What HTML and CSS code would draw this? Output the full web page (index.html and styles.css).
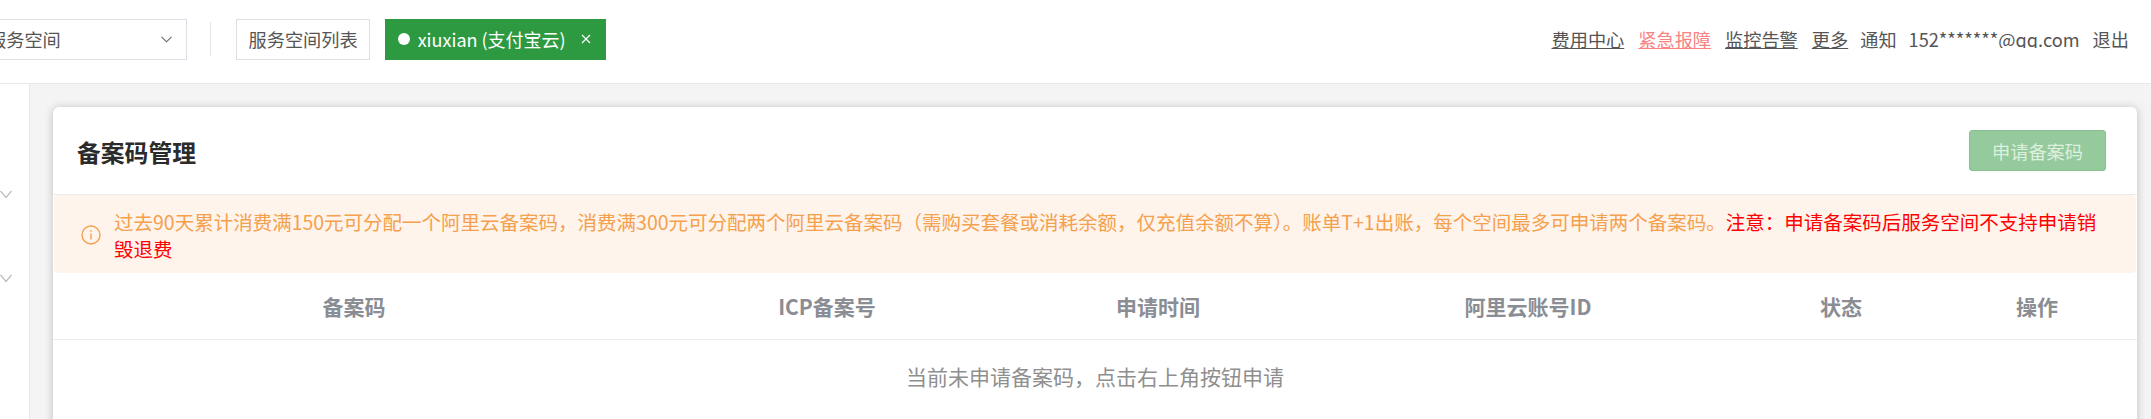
FILE: index.html
```html
<!DOCTYPE html>
<html lang="zh-CN">
<head>
    <meta charset="UTF-8">
    <title>备案码管理</title>
    <link rel="stylesheet" href="styles.css">
</head>
<body>
    <header class="topbar">
        <div class="space-select">
            <span>服务空间</span>
            <svg class="chevron" width="11" height="7" viewBox="0 0 11 7"><path d="M.5 .8l5 5 5-5" fill="none" stroke="#666" stroke-width="1.1"/></svg>
        </div>
        <div class="divider"></div>
        <div class="tab">服务空间列表</div>
        <div class="tab tab-active">
            <span class="dot"></span>
            <span>xiuxian (支付宝云)</span>
            <svg class="tab-close" width="10" height="10" viewBox="0 0 10 10"><path d="M1 1l8 8M9 1l-8 8" stroke="#fff" stroke-width="1.2"/></svg>
        </div>
        <nav class="top-links">
            <a href="#">费用中心</a>
            <a href="#" class="urgent">紧急报障</a>
            <a href="#">监控告警</a>
            <a href="#">更多</a>
            <span class="notice">通知</span>
            <span class="email">152*******@qq.com</span>
            <span class="logout">退出</span>
        </nav>
    </header>

    <div class="main">
        <aside class="sidebar">
            <svg class="side-arrow" width="12" height="9" viewBox="0 0 12 9"><path d="M.5 1l5.500 6.500L11.500 1" fill="none" stroke="#bbb" stroke-width="1.2"/></svg>
            <svg class="side-arrow" width="12" height="9" viewBox="0 0 12 9"><path d="M.5 1l5.500 6.500L11.500 1" fill="none" stroke="#bbb" stroke-width="1.2"/></svg>
        </aside>
        <section class="content">
            <div class="card">
                <div class="card-head">
                    <h2>备案码管理</h2>
                    <button type="button" class="apply-button">申请备案码</button>
                </div>
                <div class="alert">
                    <svg class="alert-icon" width="20" height="20" viewBox="0 0 20 20"><circle cx="10" cy="10" r="9" fill="none" stroke="#f5a04c" stroke-width="1.4"/><path d="M10 8.600v6M10 5.200v1.600" stroke="#f5a04c" stroke-width="1.4"/></svg>
                    <p>过去90天累计消费满150元可分配一个阿里云备案码，消费满300元可分配两个阿里云备案码（需购买套餐或消耗余额，仅充值余额不算）。账单T+1出账，每个空间最多可申请两个备案码。<span class="warn">注意：申请备案码后服务空间不支持申请销毁退费</span></p>
                </div>
                <div class="table-head">
                    <div>备案码</div>
                    <div>ICP备案号</div>
                    <div>申请时间</div>
                    <div>阿里云账号ID</div>
                    <div>状态</div>
                    <div>操作</div>
                </div>
                <div class="empty">当前未申请备案码，点击右上角按钮申请</div>
            </div>
        </section>
    </div>
</body>
</html>
```

FILE: styles.css
```css
* {
    margin: 0;
    padding: 0;
    box-sizing: border-box;
}

html, body {
    height: 419px;
    overflow: hidden;
}

body {
    background: #fff;
    color: #555;
    font-family: "Noto Sans CJK SC", "Noto Sans", sans-serif;
    font-size: 18.2px;
}

.topbar {
    display: flex;
    align-items: center;
    height: 84px;
    padding-bottom: 5px;
    background: #fff;
    border-bottom: 1px solid #e8e8e8;
}

.space-select {
    display: flex;
    align-items: center;
    justify-content: space-between;
    width: 200px;
    height: 41px;
    margin-left: -13px;
    padding-right: 14px;
    border: 1px solid #dcdfe6;
    color: #555;
    flex-shrink: 0;
}

.divider {
    width: 1px;
    height: 34px;
    margin: 0 25px 0 23px;
    background: #e6e6e6;
}

.tab {
    display: flex;
    align-items: center;
    height: 41px;
    padding: 0 11.5px;
    border: 1px solid #dcdfe6;
    color: #555;
    white-space: nowrap;
}

.tab-active {
    width: 221px;
    gap: 8px;
    margin-left: 15px;
    background: #2d9a41;
    border-color: #2d9a41;
    color: #fff;
    font-size: 18px;
}

.dot {
    width: 12px;
    height: 12px;
    border-radius: 50%;
    background: #fff;
}

.tab-close {
    margin-left: 7px;
}

.top-links {
    display: flex;
    align-items: center;
    gap: 14px;
    height: 26px;
    margin-left: auto;
    margin-right: 22px;
    line-height: 26px;
}

.top-links a {
    color: #555;
}

.top-links .urgent {
    color: #f98383;
}

.notice {
    margin-left: -2px;
}

.email {
    align-self: flex-start;
    height: 22px;
    margin-left: -2px;
    overflow: hidden;
}

.logout {
    margin-left: -1px;
}

.main {
    display: flex;
    height: 335px;
    overflow: hidden;
}

.sidebar {
    display: flex;
    flex-direction: column;
    gap: 75px;
    width: 30px;
    padding-top: 106px;
    background: #fff;
    border-right: 1px solid #e8e8e8;
    flex-shrink: 0;
}

.side-arrow {
    flex-shrink: 0;
}

.content {
    flex: 1;
    padding: 23px 14px 0 23px;
    background: #f4f4f4;
}

.card {
    height: 340px;
    background: #fff;
    border-radius: 6px;
    box-shadow: 0 1px 10px rgba(0, 0, 0, 0.22);
}

.card-head {
    display: flex;
    align-items: center;
    justify-content: space-between;
    height: 88px;
    padding: 0 31px 0 24px;
    border-bottom: 1px solid #ebebeb;
}

.card-head h2 {
    margin-top: 2px;
    color: #2b2b2b;
    font-size: 23.8px;
    font-weight: 700;
}

.apply-button {
    width: 137px;
    height: 41px;
    background: #94ca9c;
    border: 1px solid #8bbf94;
    border-radius: 3px;
    color: #ddf0df;
    font-family: inherit;
    font-size: 18.2px;
}

.alert {
    display: flex;
    align-items: center;
    gap: 13px;
    margin: 0 1px;
    padding: 13px 31px 11px 27px;
    background: #fff4ec;
    border-radius: 4px;
    color: #f5a04c;
    font-size: 19.5px;
    line-height: 27px;
}

.alert-icon {
    flex-shrink: 0;
}

.warn {
    color: #f00;
}

.table-head {
    display: grid;
    grid-template-columns: 602px 344px 318px 422px 204px 188px;
    height: 67px;
    align-items: center;
    text-align: center;
    border-bottom: 1px solid #ebedf2;
    color: #8a8d93;
    font-size: 21px;
    font-weight: 700;
}

.empty {
    padding-top: 21px;
    text-align: center;
    color: #8f8f8f;
    font-size: 21px;
}
```
